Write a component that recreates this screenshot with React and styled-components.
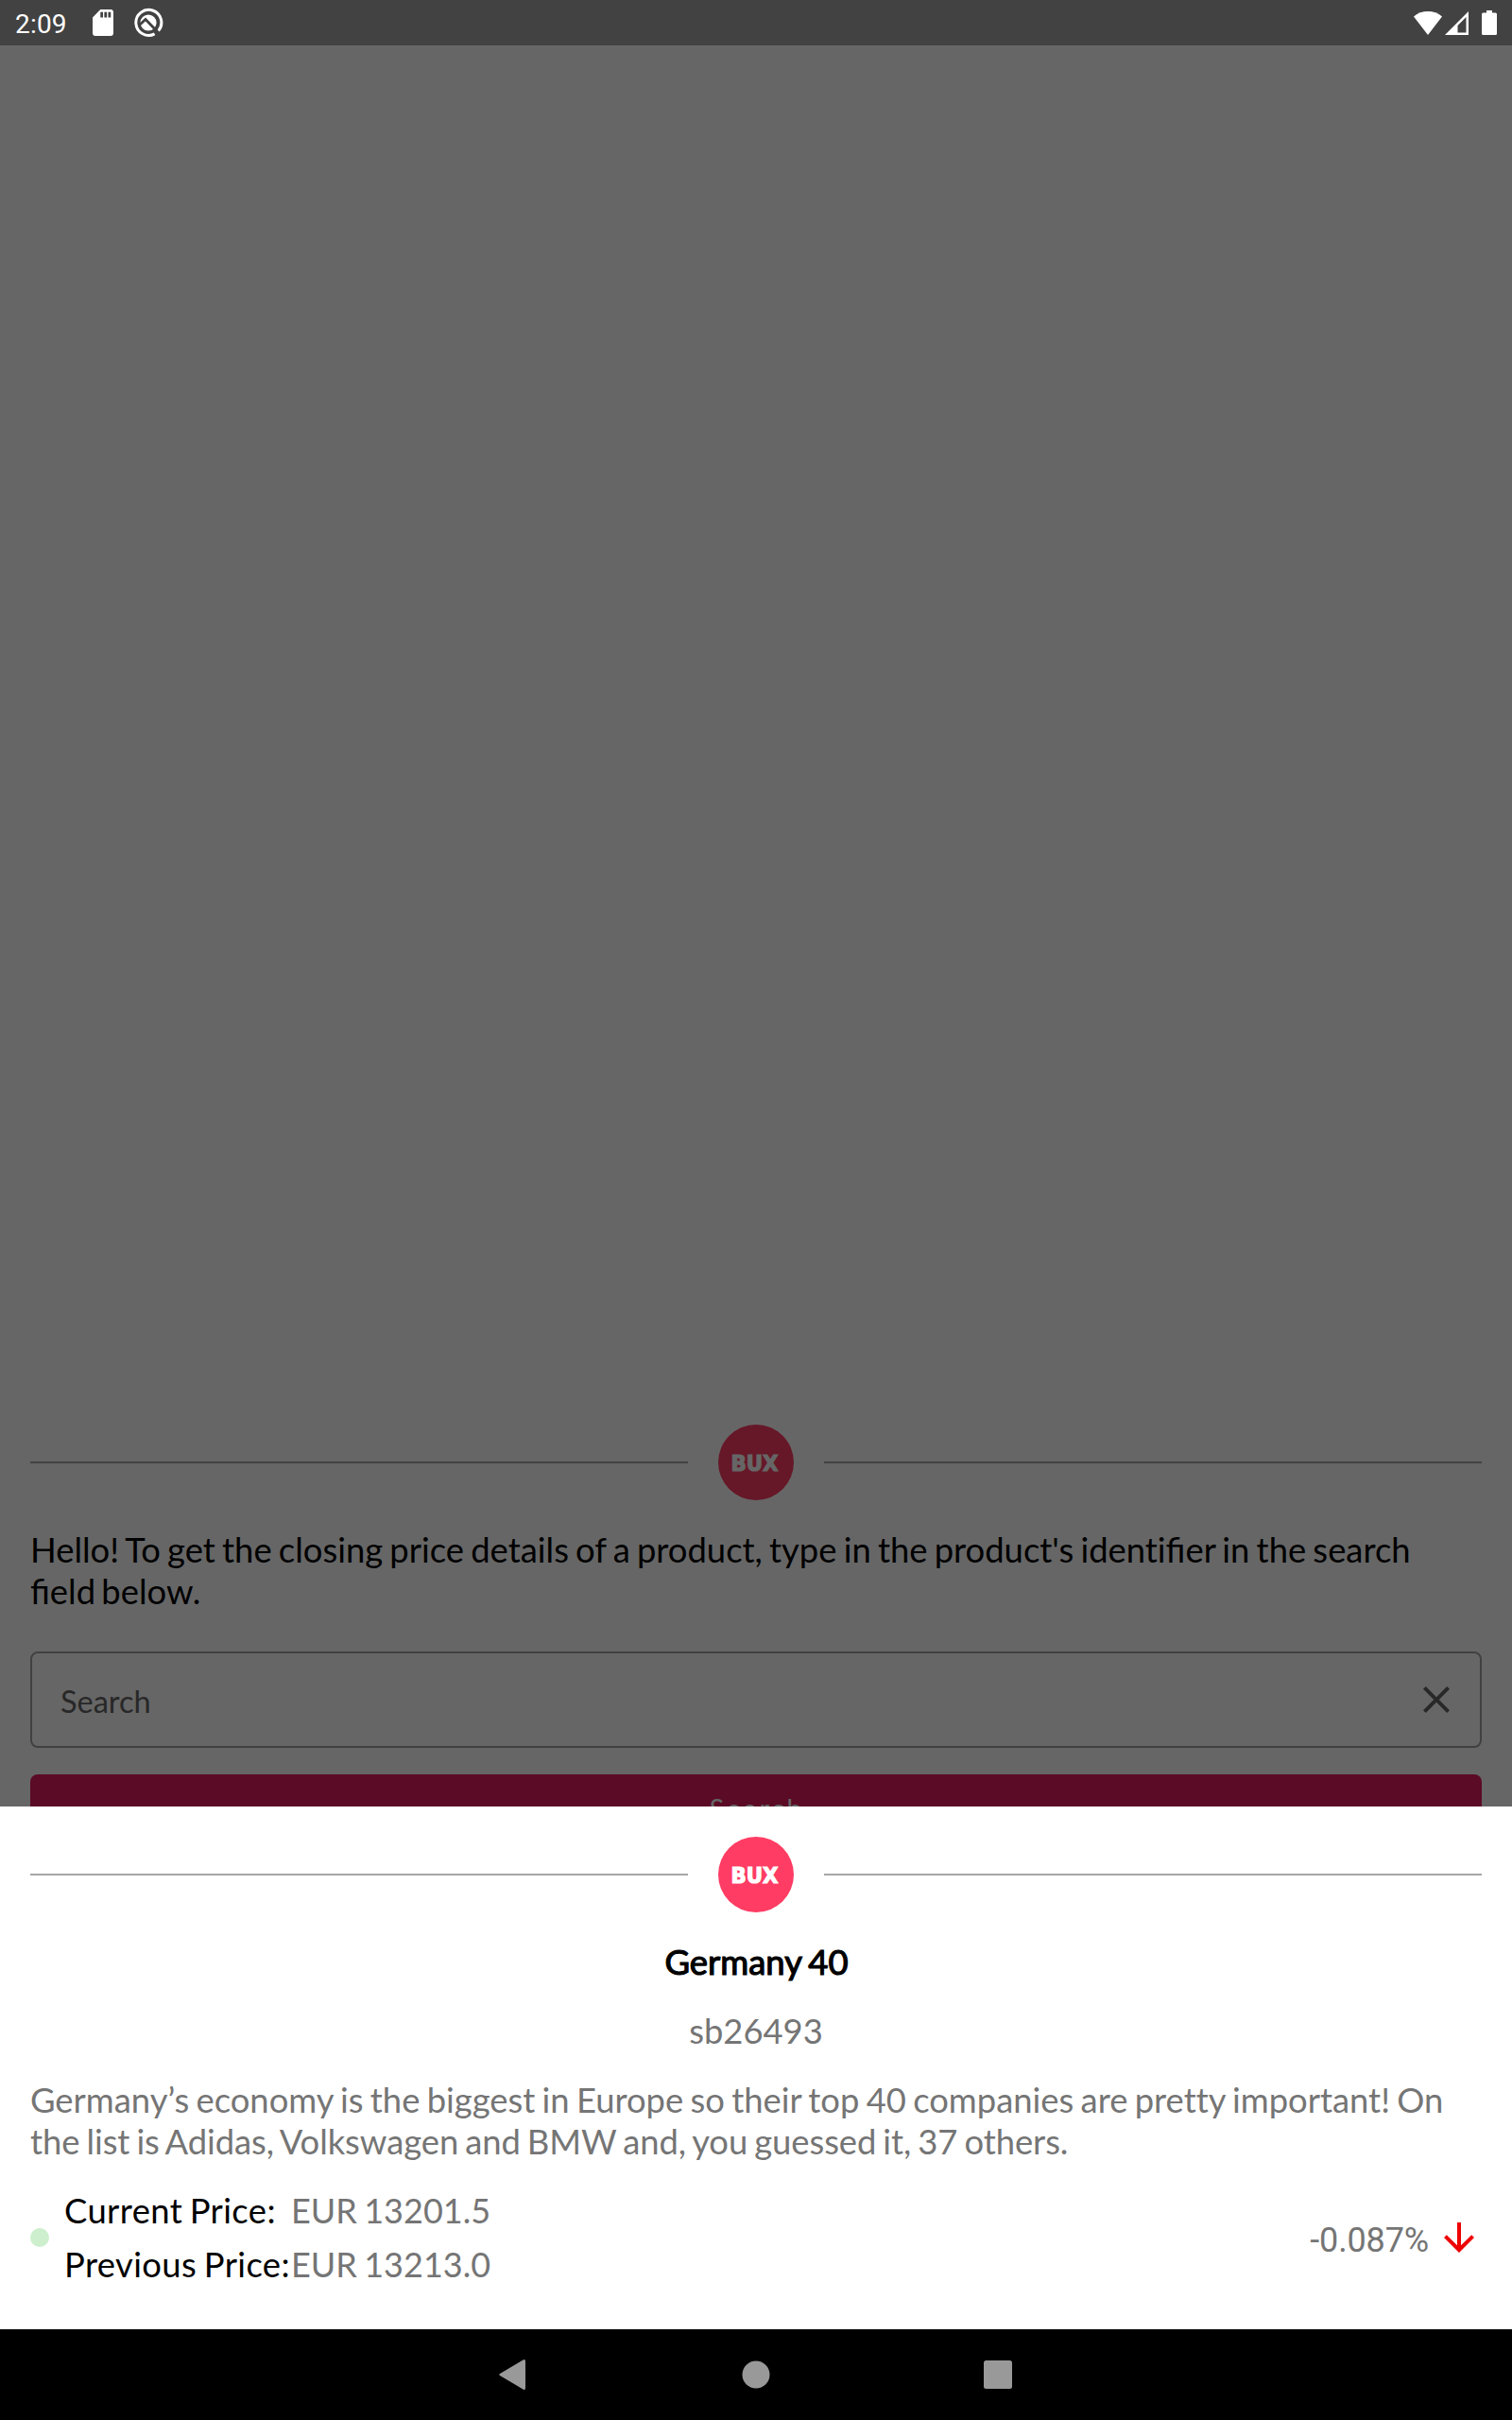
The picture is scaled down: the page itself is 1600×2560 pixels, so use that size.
import React from "react";
import styled, { createGlobalStyle } from "styled-components";

const GlobalStyle = createGlobalStyle`
  * { box-sizing: border-box; }
  body { margin: 0; font-family: Lato, "Noto Sans", sans-serif; font-variant-ligatures: none; }
  svg { display: block; flex: none; }
`;

const Screen = styled.div`
  position: relative;
  display: flex;
  flex-direction: column;
  width: 1600px;
  height: 2560px;
  overflow: hidden;
  background: #fff;
`;

const StatusBar = styled.header`
  display: flex;
  align-items: center;
  justify-content: space-between;
  height: 48px;
  padding: 0 16px;
  background: #424242;
  color: #fff;
  font: 400 28px/44px Roboto, sans-serif;
`;

const StatusGroup = styled.div`
  display: flex;
  align-items: center;
  gap: ${(p) => p.$gap || 0}px;
  height: 48px;
`;

const Clock = styled.span`
  width: 61px;
  padding-top: 4px;
  letter-spacing: 0.2px;
`;

const BatterySlot = styled.span`
  margin-left: 11px;
`;

const Content = styled.main`
  position: relative;
  flex: 1;
  display: flex;
  flex-direction: column;
  justify-content: flex-end;
  padding: 0 32px 515px;
`;

const Scrim = styled.div`
  position: absolute;
  inset: 0;
  background: rgba(0, 0, 0, 0.6);
`;

const BrandRow = styled.div`
  display: flex;
  align-items: center;
  gap: 32px;
  height: 80px;
`;

const Line = styled.span`
  flex: 1;
  height: 2px;
  background: #a6a6a6;
`;

const LogoText = styled.text`
  font-family: "DejaVu Sans", sans-serif;
  font-size: 23px;
  font-weight: 700;
  fill: #fff;
  stroke: #fff;
  stroke-width: 1.2px;
`;

const Text = styled.p`
  margin: ${(p) => p.$top || 0}px 0 0;
  color: ${(p) => (p.$muted ? "#757575" : "#000")};
  font-size: 36.4px;
  font-weight: 400;
  line-height: 44px;
  text-align: ${(p) => (p.$center ? "center" : "left")};
  white-space: nowrap;
`;

const TextLine = styled.span`
  display: block;
  letter-spacing: ${(p) => p.$track || 0}px;
  word-spacing: ${(p) => p.$space}px;
`;

const Ligature = styled.span`
  font-variant-ligatures: common-ligatures;
`;

const Title = styled(Text).attrs({ as: "h2" })`
  font-size: 36.4px;
  padding-left: 1px;
  word-spacing: -2px;
  -webkit-text-stroke: 1.2px #000;
`;

const SearchField = styled.div`
  display: flex;
  align-items: center;
  justify-content: space-between;
  height: 102px;
  margin-top: 42px;
  padding: 3px 22px 0 30px;
  border: 2px solid #a4a4a4;
  border-radius: 8px;
  color: #646464;
  font-size: 32.5px;
  line-height: 40px;

  svg { margin-top: -3px; }
`;

const SearchButton = styled.button`
  height: 72px;
  margin-top: 28px;
  padding: 0 0 1px 2px;
  border: 0;
  border-radius: 8px;
  background: #e31c5c;
  color: #fff;
  font: 400 28.4px/34px Lato, sans-serif;
  letter-spacing: 2.8px;
`;

const Sheet = styled.section`
  position: absolute;
  left: 0;
  right: 0;
  bottom: 96px;
  height: 553px;
  padding: 32px 32px 0;
  background: #fff;
`;

const PriceRow = styled.div`
  display: flex;
  align-items: center;
  margin-top: 29px;
`;

const LiveDot = styled.span`
  width: 20px;
  height: 20px;
  margin-right: 16px;
  border-radius: 50%;
  background: #cdefcd;
`;

const Prices = styled.div`
  display: grid;
  grid-template-columns: 240px auto;
  row-gap: 13px;
`;

const Label = styled(Text)`
  letter-spacing: 0.4px;
  word-spacing: -2.2px;
`;

const Value = styled(Text)`
  font-size: 36px;
  word-spacing: -1.8px;
`;

const Change = styled.span`
  margin: 6px 8px 0 auto;
  color: #757575;
  font: 400 36px/44px Roboto, sans-serif;
  letter-spacing: -0.15px;
`;

const NavBar = styled.nav`
  position: relative;
  display: flex;
  align-items: center;
  justify-content: center;
  gap: 224px;
  height: 96px;
  background: #000;
`;

const Brand = () => (
  <BrandRow>
    <Line />
    <svg width="80" height="80" viewBox="0 0 80 80">
      <circle cx="40" cy="40" r="40" fill="#ff3c64" />
      <LogoText x="13.400" y="49.400" textLength="50" lengthAdjust="spacingAndGlyphs">
        BUX
      </LogoText>
    </svg>
    <Line />
  </BrandRow>
);

const SdCardIcon = () => (
  <svg width="22" height="28" viewBox="4 2 16 20" preserveAspectRatio="none">
    <path
      fill="#fff"
      d="M18 2H10L4 8V20C4 21.1 4.9 22 6 22H18C19.1 22 20 21.1 20 20V4C20 2.9 19.1 2 18 2zM12 8H10V4H12zM15 8H13V4H15zM18 8H16V4H18z"
    />
  </svg>
);

const ProfilerIcon = () => (
  <svg width="32" height="32" viewBox="0 0 32 32">
    <path d="M22.6 27.8A13.500 13.500 0 1 1 26.600 24.600" fill="none" stroke="#fff" strokeWidth="3" />
    <circle cx="16" cy="16" r="8.600" fill="#fff" />
    <path d="M6.500 18.500L13 12.500L25.500 25.500" fill="none" stroke="#424242" strokeWidth="2.800" />
  </svg>
);

const WifiIcon = () => (
  <svg width="30" height="25" viewBox="0 0 30 25">
    <path d="M0 5.500C8.500 -1.800 21.500 -1.800 30 5.500L15 25z" fill="#fff" />
  </svg>
);

const SignalIcon = () => (
  <svg width="25" height="25" viewBox="0 0 25 25">
    <path fillRule="evenodd" d="M25 0V25H0zM22.500 6L13.500 15V22.500H22.500z" fill="#fff" />
  </svg>
);

const BatteryIcon = () => (
  <svg width="16" height="26" viewBox="0 0 16 26">
    <rect x="5" y="0" width="6" height="4" fill="#fff" />
    <rect x="0" y="2.500" width="16" height="23.500" rx="1.500" fill="#fff" />
  </svg>
);

const CloseIcon = () => (
  <svg width="48" height="48" viewBox="0 0 24 24">
    <path
      fill="#646464"
      d="M19 6.410L17.590 5 12 10.590 6.410 5 5 6.410 10.590 12 5 17.590 6.410 19 12 13.410 17.590 19 19 17.590 13.410 12z"
    />
  </svg>
);

const ArrowDownIcon = () => (
  <svg width="48" height="48" viewBox="0 0 24 24">
    <path fill="#ee0000" d="M20 12l-1.410-1.410L13 16.170V4h-2v12.170l-5.580-5.590L4 12l8 8 8-8z" />
  </svg>
);

export default function App() {
  return (
    <Screen>
      <GlobalStyle />
      <StatusBar>
        <StatusGroup $gap={21}>
          <Clock>2:09</Clock>
          <SdCardIcon />
          <ProfilerIcon />
        </StatusGroup>
        <StatusGroup $gap={3}>
          <WifiIcon />
          <SignalIcon />
          <BatterySlot>
            <BatteryIcon />
          </BatterySlot>
        </StatusGroup>
      </StatusBar>

      <Content>
        <Brand />
        <Text $top={30}>
          <TextLine $space={-2.1}>
            Hello! To get the closing price details of a product, type in the product's identi<Ligature>fi</Ligature>er
            in the search
          </TextLine>
          <TextLine $space={-3}>
            <Ligature>fi</Ligature>eld below.
          </TextLine>
        </Text>
        <SearchField>
          <span>Search</span>
          <CloseIcon />
        </SearchField>
        <SearchButton>Search</SearchButton>
        <Scrim />
      </Content>

      <Sheet>
        <Brand />
        <Title $top={30} $center>Germany 40</Title>
        <Text $top={29} $center $muted>sb26493</Text>
        <Text $top={29} $muted>
          <TextLine $space={-2}>
            Germany’s economy is the biggest in Europe so their top 40 companies are pretty important! On
          </TextLine>
          <TextLine $space={-2.2} $track={-0.06}>
            the list is Adidas, Volkswagen and BMW and, you guessed it, 37 others.
          </TextLine>
        </Text>
        <PriceRow>
          <LiveDot />
          <Prices>
            <Label>Current Price:</Label>
            <Value $muted>EUR 13201.5</Value>
            <Label>Previous Price:</Label>
            <Value $muted>EUR 13213.0</Value>
          </Prices>
          <Change>-0.087%</Change>
          <ArrowDownIcon />
        </PriceRow>
      </Sheet>

      <NavBar>
        <svg width="32" height="34" viewBox="0 0 32 34">
          <path d="M1 16L25.500 1.500Q28 0 28 3V31Q28 34 25.500 32.500L1 18Q-0.500 17 1 16z" fill="#999" />
        </svg>
        <svg width="32" height="34" viewBox="0 0 32 34">
          <circle cx="16" cy="17" r="14.500" fill="#999" />
        </svg>
        <svg width="32" height="34" viewBox="0 0 32 34">
          <rect x="1" y="2" width="30" height="30" rx="2.500" fill="#999" />
        </svg>
      </NavBar>
    </Screen>
  );
}
